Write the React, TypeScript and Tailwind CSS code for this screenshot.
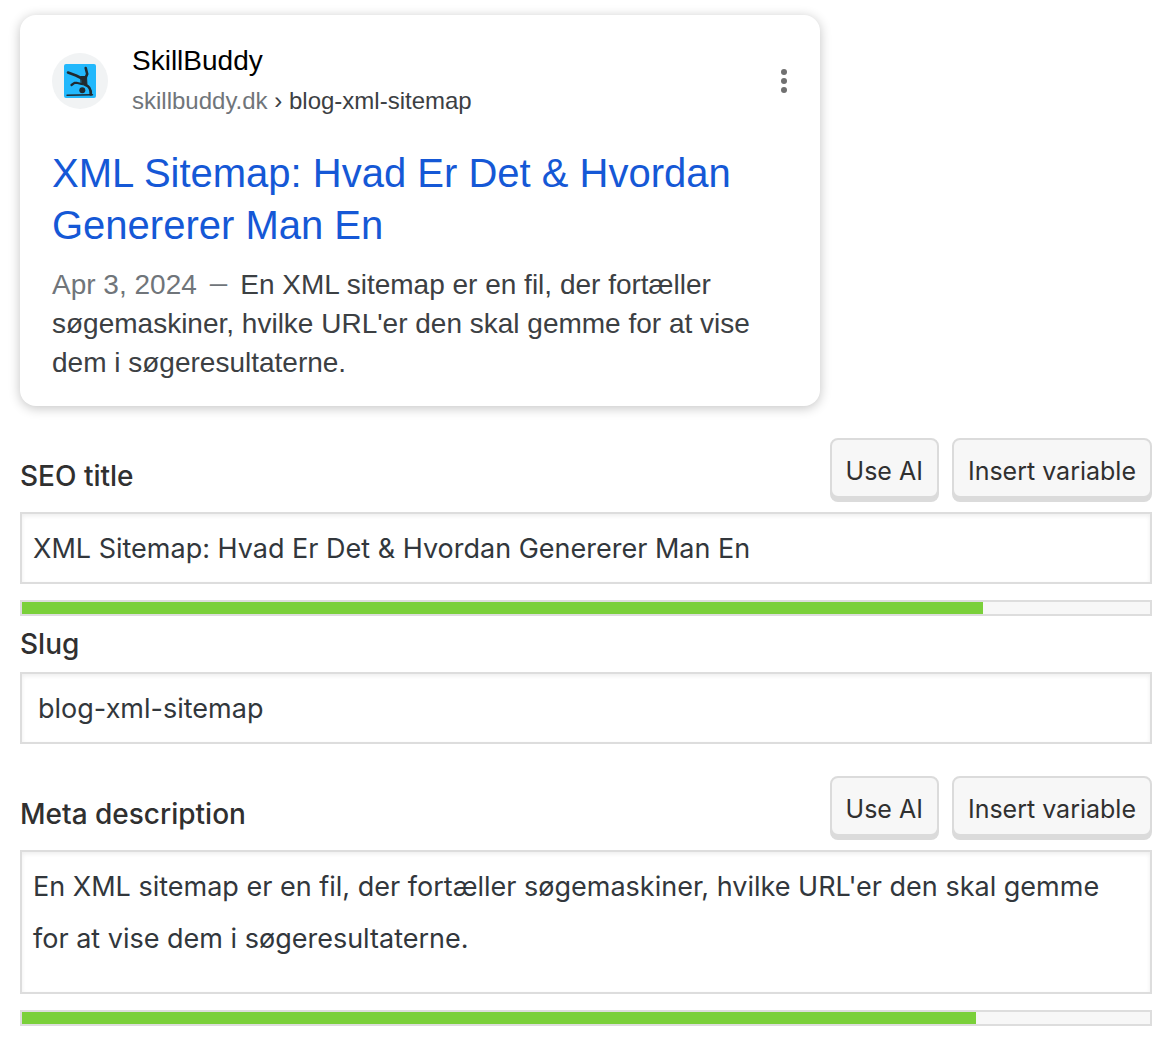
import { useState } from 'react';

interface ProgressBarProps {
  label: string;
  value: number;
  max: number;
}

function ProgressBar({ label, value, max }: ProgressBarProps) {
  return (
    <progress
      aria-label={label}
      value={value}
      max={max}
      className="mt-4 block h-4 w-full appearance-none border-2 border-[#ddd] bg-[#f7f7f7] [&::-webkit-progress-bar]:bg-[#f7f7f7] [&::-webkit-progress-value]:bg-[#7ad03a]"
    />
  );
}

function FieldButton({ children }: { children: string }) {
  return (
    <button
      type="button"
      className="h-[60px] rounded-lg border-2 border-[#dbdbdb] bg-[#f7f7f7] px-[14px] pt-2 text-[25px] text-[#303030] shadow-[0_4px_0_#dbdbdb]"
    >
      {children}
    </button>
  );
}

function FieldHeader({ id, label }: { id: string; label: string }) {
  return (
    <div className="mt-8 flex h-16 items-start justify-between">
      <label htmlFor={id} className="mt-3 text-[28px] leading-[52px] font-medium text-[#303030]">
        {label}
      </label>
      <div className="flex gap-[13px]">
        <FieldButton>Use AI</FieldButton>
        <FieldButton>Insert variable</FieldButton>
      </div>
    </div>
  );
}

function Favicon() {
  return (
    <div className="flex size-14 shrink-0 items-center justify-center rounded-full bg-[#f1f3f4]">
      <svg viewBox="0 0 32 34" className="h-[34px] w-8" aria-hidden="true">
        <rect width="32" height="34" rx="2" fill="#22b8fc" />
        <g fill="none" stroke="#202a30" strokeLinecap="round" strokeLinejoin="round">
          <path d="M4 8.500L12 11.500L18 14.500" strokeWidth="2.600" />
          <path d="M21.700 4L23.200 10L21.500 14" strokeWidth="2.600" />
          <path d="M17 12.500L22.500 12.500L23 21.500L17.500 20.500Z" fill="#202a30" strokeWidth="1" />
          <path d="M17.500 20L12.500 18.800L10.500 18.800L7.500 21" strokeWidth="2.200" />
          <path d="M21.500 21C25 22 27 25 26.800 30.500" strokeWidth="2.600" />
          <path d="M3 31.200L28.500 30.800" strokeWidth="1.400" />
        </g>
        <circle cx="18.300" cy="26.300" r="3" fill="#202a30" />
      </svg>
    </div>
  );
}

interface SearchPreviewProps {
  title: string;
  slug: string;
  description: string;
}

function SearchPreview({ title, slug, description }: SearchPreviewProps) {
  return (
    <section className="max-w-[800px] rounded-2xl bg-white px-8 pt-[26px] pb-6 font-['Liberation_Sans',sans-serif] shadow-[0_2px_12px_rgba(0,0,0,0.24)]">
      <div className="flex items-center">
        <Favicon />
        <div className="ml-6">
          <div className="text-[28px] leading-10 text-black">SkillBuddy</div>
          <div className="text-2xl leading-10 text-[#3c4043]">
            <span className="text-[#70757a]">skillbuddy.dk</span> › {slug}
          </div>
        </div>
        <button type="button" aria-label="More options" className="ml-auto">
          <svg viewBox="0 0 8 24" className="h-6 w-2" fill="#707070" aria-hidden="true">
            <circle cx="4" cy="3" r="3" />
            <circle cx="4" cy="12" r="3" />
            <circle cx="4" cy="21" r="3" />
          </svg>
        </button>
      </div>
      <h3 className="mt-[26px] text-[40px] leading-[52px] text-[#1558d6]">{title}</h3>
      <p className="mt-[14px] text-[28px] leading-[39px] text-[#3c4043]">
        <span className="text-[#70757a]">Apr 3, 2024</span>{' '}
        <span className="mx-0.5 font-['Noto_Sans_CJK_JP',sans-serif] text-2xl leading-none text-[#70757a]">－</span>{' '}
        {description}
      </p>
    </section>
  );
}

export default function App() {
  const [title, setTitle] = useState('XML Sitemap: Hvad Er Det & Hvordan Genererer Man En');
  const [slug, setSlug] = useState('blog-xml-sitemap');
  const [description, setDescription] = useState(
    "En XML sitemap er en fil, der fortæller søgemaskiner, hvilke URL'er den skal gemme for at vise dem i søgeresultaterne."
  );

  return (
    <main className="bg-white pt-[15px] pr-[22px] pb-[26px] pl-5 font-['Inter',sans-serif]">
      <SearchPreview title={title} slug={slug} description={description} />

      <FieldHeader id="seo-title" label="SEO title" />
      <input
        id="seo-title"
        type="text"
        value={title}
        onChange={(e) => setTitle(e.target.value)}
        className="mt-[10px] block h-[72px] w-full border-2 border-[#ddd] bg-white px-[11px] text-[27px] text-[#32373c] shadow-[inset_0_2px_4px_rgba(0,0,0,0.07)]"
      />
      <ProgressBar label="SEO title length" value={511} max={600} />

      <label htmlFor="slug" className="block text-[28px] leading-[56px] font-medium text-[#303030]">
        Slug
      </label>
      <input
        id="slug"
        type="text"
        value={slug}
        onChange={(e) => setSlug(e.target.value)}
        className="block h-[72px] w-full border-2 border-[#ddd] bg-white px-4 text-[27px] text-[#32373c] shadow-[inset_0_2px_4px_rgba(0,0,0,0.07)]"
      />

      <FieldHeader id="meta-description" label="Meta description" />
      <textarea
        id="meta-description"
        value={description}
        onChange={(e) => setDescription(e.target.value)}
        className="mt-[10px] block h-36 w-full resize-none border-2 border-[#ddd] bg-white px-[11px] py-[9px] text-[27px] leading-[52px] text-[#32373c] shadow-[inset_0_2px_4px_rgba(0,0,0,0.07)]"
      />
      <ProgressBar label="Meta description length" value={132} max={156} />
    </main>
  );
}
